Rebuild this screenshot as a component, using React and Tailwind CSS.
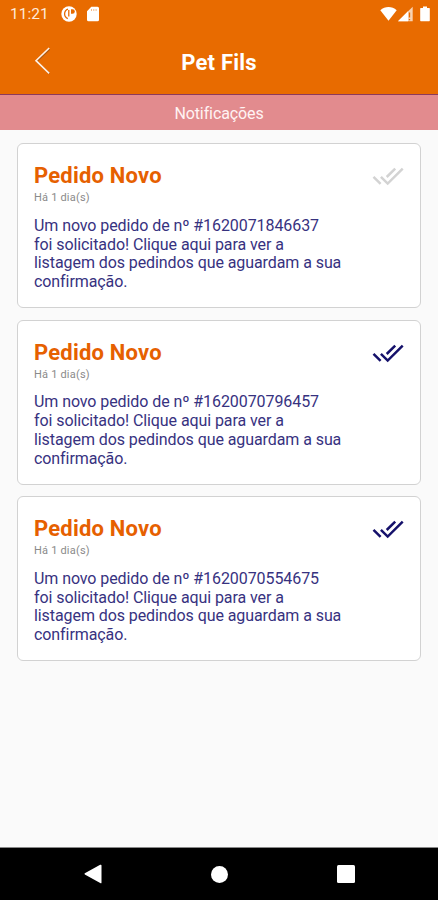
const notifications = [
  { id: '1620071846637', read: false },
  { id: '1620070796457', read: true },
  { id: '1620070554675', read: true },
]

function StatusBar() {
  return (
    <div className="flex h-7 items-center pl-[10px] pr-[8px] text-[#ffe9d9]">
      <span className="w-[51px] text-[15.5px] leading-7">11:21</span>
      <svg className="h-4 w-4" viewBox="0 0 16 16" aria-hidden="true">
        <circle cx="8" cy="8" r="7.7" fill="#fff" />
        <path d="M7 3.200A5 5 0 0 0 6.800 12.600M7.800 4v6.500" fill="none" stroke="#e86b00" strokeWidth="1.300" />
        <path d="M10 3.200h1.500a2.300 2.300 0 0 1 0 4.600H10z" fill="#e86b00" />
      </svg>
      <svg className="ml-[10px] h-4 w-3" viewBox="0 0 12 16" aria-hidden="true">
        <path d="M4.3.8h6.2A1.5 1.5 0 0 1 12 2.300v11.400a1.500 1.500 0 0 1-1.500 1.500h-9A1.500 1.500 0 0 1 0 13.700V5.200z" fill="#fff" />
        <path d="M4.500 3v2M6.800 3v2M9.100 3v2" stroke="#e86b00" strokeOpacity="0.6" strokeWidth="0.8" />
      </svg>
      <svg className="ml-auto h-4 w-[17px]" viewBox="0 0 17 16" aria-hidden="true">
        <path d="M.3 4.200C5-.2 12-.2 16.700 4.200L8.500 14.700z" fill="#fff" />
      </svg>
      <svg className="ml-px h-4 w-[15px]" viewBox="0 0 15 16" aria-hidden="true">
        <path d="M0 15.200 14.700.7v14.500z" fill="#fff" opacity="0.7" />
        <path d="M0 15.200 10 5.300v9.900z" fill="#fff" />
        <path d="M11.500 6.500v5M11.500 13v1.300" stroke="#e86b00" strokeWidth="1.300" />
      </svg>
      <svg className="ml-[7px] h-4 w-[10px]" viewBox="0 0 10 16" aria-hidden="true">
        <path d="M3 .5h4V2h2.200q.6 0 .6.600v12q0 .6-.6.600H.8q-.6 0-.6-.600v-12Q.2 2 .8 2H3z" fill="#fff" />
      </svg>
    </div>
  )
}

function Header() {
  return (
    <div className="relative flex h-[65px] items-center justify-center">
      <button type="button" aria-label="Voltar" className="absolute left-[34px] top-[18px]">
        <svg className="h-7 w-4" viewBox="0 0 16 28" fill="none">
          <path d="M15.800 3 2.800 15.500l13 12.300" stroke="#7a4a20" strokeOpacity="0.55" strokeWidth="1.600" />
          <path d="M15.200 2 2 14.700 15.200 27.300" stroke="#fff0e4" strokeWidth="1.600" />
        </svg>
      </button>
      <h1 className="mt-[4px] text-[22px] font-bold leading-7 tracking-[0.2px] text-white">Pet Fils</h1>
    </div>
  )
}

function DoubleCheck({ read }) {
  return (
    <svg
      className={read ? 'h-5 w-8 text-[#15116b]' : 'h-5 w-8 text-[#d3d3d3]'}
      viewBox="0 0 32 20"
      fill="none"
      stroke="currentColor"
      strokeWidth="2.5"
      aria-hidden="true"
    >
      <path d="M1.500 9.800 8.600 16.900M8.900 9.800l6.800 6.800L30.700 1.600M14.700 10 23.200 1.600" />
    </svg>
  )
}

function NotificationCard({ id, read }) {
  return (
    <article className="flex h-[165px] justify-between rounded-[6px] border-[1.5px] border-[#d2d2d2] bg-white pl-4 pr-4">
      <div className="whitespace-nowrap">
        <h2 className="mt-[18.4px] text-[22px] font-bold leading-7 tracking-[0.2px] text-[#e66000]">Pedido Novo</h2>
        <p className="mt-px text-[11px] leading-[14px] tracking-[0.2px] text-[#8a8a8a]">Há 1 dia(s)</p>
        <p className="mt-[11.6px] text-[16px] leading-[18.7px] tracking-[-0.08px] text-[#37327f]">
          Um novo pedido de nº #{id}
          <br />
          foi solicitado! Clique aqui para ver a
          <br />
          listagem dos pedindos que aguardam a sua
          <br />
          confirmação.
        </p>
      </div>
      <div className="mt-[23px]">
        <DoubleCheck read={read} />
      </div>
    </article>
  )
}

function NavigationBar() {
  return (
    <nav className="flex h-[53px] items-center justify-between border-t border-[#888] bg-black pl-[83.5px] pr-[83.5px]">
      <svg className="h-5 w-[18px]" viewBox="0 0 18 20" fill="#fff" aria-hidden="true">
        <path d="M.8 9.300 16.200.8q1.300-.5 1.300.8v16.800q0 1.300-1.300.6L.8 10.400q-.6-.5 0-1.100z" />
      </svg>
      <div className="h-[17px] w-[17px] rounded-full bg-white" />
      <div className="h-[18px] w-[18px] rounded-[1.500px] bg-white" />
    </nav>
  )
}

function App() {
  return (
    <div className="flex h-[900px] w-[438px] flex-col overflow-hidden bg-[#fafafa] font-['Roboto','Liberation_Sans',sans-serif]">
      <header className="h-[95px] shrink-0 border-b border-[#8c3a5c] bg-[#e86b00]">
        <StatusBar />
        <Header />
      </header>
      <div className="flex h-[35px] shrink-0 items-center justify-center bg-[#e28b8e] pt-[3px] text-[16px] leading-5 tracking-[-0.1px] text-[#fff3f3]">
        Notificações
      </div>
      <main className="flex flex-1 flex-col gap-[11.5px] pl-[17px] pr-[17px] pt-[13px]">
        {notifications.map((item) => (
          <NotificationCard key={item.id} id={item.id} read={item.read} />
        ))}
      </main>
      <NavigationBar />
    </div>
  )
}

export default App
